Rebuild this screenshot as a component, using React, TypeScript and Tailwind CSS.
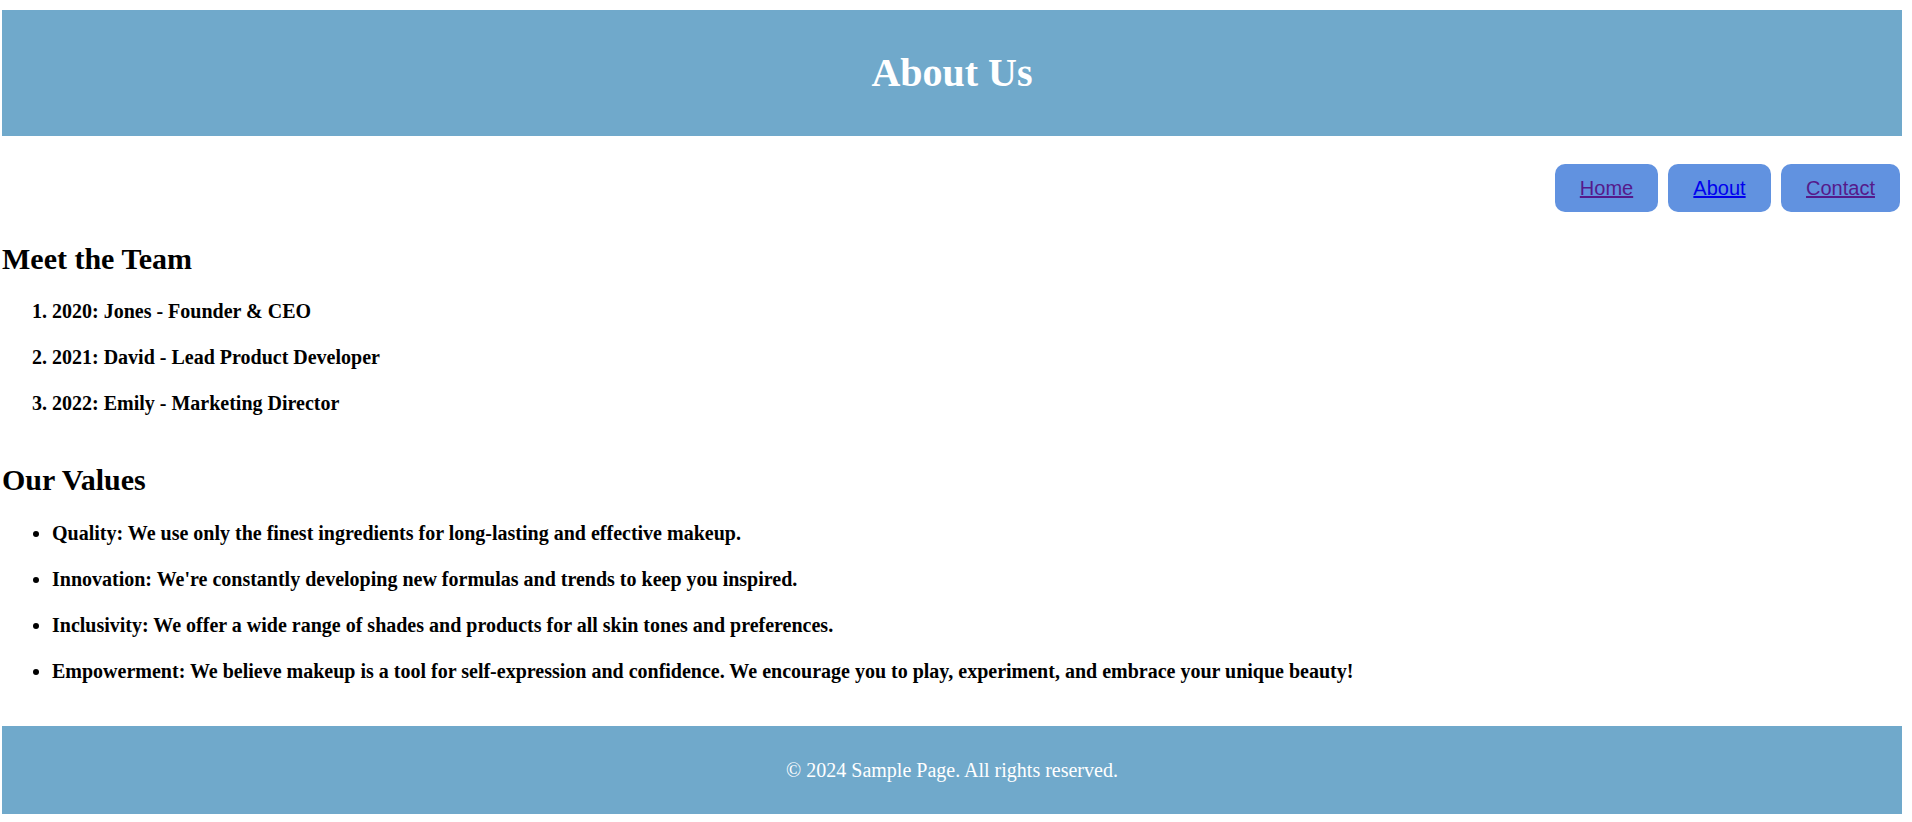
const team = [
    "2020: Jones - Founder & CEO",
    "2021: David - Lead Product Developer",
    "2022: Emily - Marketing Director",
];

const values = [
    "Quality: We use only the finest ingredients for long-lasting and effective makeup.",
    "Innovation: We're constantly developing new formulas and trends to keep you inspired.",
    "Inclusivity: We offer a wide range of shades and products for all skin tones and preferences.",
    "Empowerment: We believe makeup is a tool for self-expression and confidence. We encourage you to play, experiment, and embrace your unique beauty!",
];

const links = [
    {label: "Home", w: "w-[103px]", color: "text-[#551a8b]"},
    {label: "About", w: "w-[103px]", color: "text-[#0000ee]"},
    {label: "Contact", w: "w-[119px]", color: "text-[#551a8b]"},
];

const App = () => {
    return (
        <div className="min-h-screen bg-white pt-[10px] pl-[2px] pr-[10px] text-black font-['Liberation_Serif','Times_New_Roman',serif]">
            <header className="h-[126px] bg-[#70a9cb] flex items-center justify-center">
                <h1 className="text-[40px] leading-[44px] font-bold text-white">About Us</h1>
            </header>

            <nav className="mt-[28px] pr-[2px] flex justify-end gap-[10px]">
                {links.map((l) => (
                    <a
                        key={l.label}
                        href="#"
                        className={`${l.w} ${l.color} h-[48px] rounded-[10px] bg-[#6192e0] flex items-center justify-center underline text-[20px] leading-[23px] font-['Liberation_Sans',Arial,sans-serif]`}
                    >
                        {l.label}
                    </a>
                ))}
            </nav>

            <main>
                <h2 className="mt-[30px] text-[30px] leading-[34px] font-bold">Meet the Team</h2>
                <ol className="mt-[24px] list-decimal pl-[50px] space-y-[23px] text-[20px] leading-[23px] font-bold">
                    {team.map((t) => (
                        <li key={t}>{t}</li>
                    ))}
                </ol>

                <h2 className="mt-[48px] text-[30px] leading-[34px] font-bold">Our Values</h2>
                <ul className="mt-[25px] list-disc pl-[50px] space-y-[23px] text-[20px] leading-[23px] font-bold">
                    {values.map((v) => (
                        <li key={v}>{v}</li>
                    ))}
                </ul>
            </main>

            <footer className="mt-[43px] h-[88px] bg-[#70a9cb] flex items-center justify-center">
                <p className="text-[20px] leading-[23px] text-white">© 2024 Sample Page. All rights reserved.</p>
            </footer>
        </div>
    );
};

export default App;
